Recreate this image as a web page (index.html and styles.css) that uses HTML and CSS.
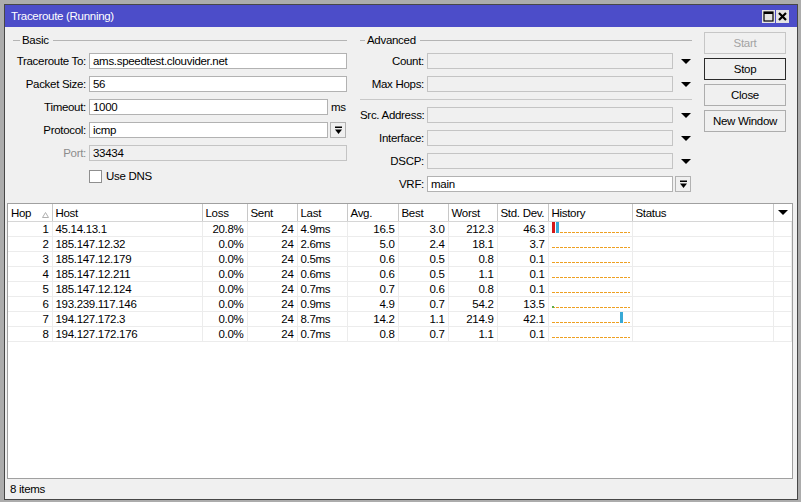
FILE: index.html
```html
<!DOCTYPE html>
<html lang="en">

<head>
    <meta charset="UTF-8" />
    <title>Traceroute (Running)</title>
    <link rel="stylesheet" href="styles.css">
</head>

<body>
    <div class="window">
        <div class="titlebar">
            <span class="title">Traceroute (Running)</span>
            <div class="win-btns">
                <span class="win-btn">
                    <svg width="11" height="11" viewBox="0 0 11 11"><rect x="1" y="1" width="9" height="9" fill="none" stroke="#000" stroke-width="1.2"/><rect x="1" y="1" width="9" height="2" fill="#000"/></svg>
                </span>
                <span class="win-btn">
                    <svg width="11" height="11" viewBox="0 0 11 11"><path d="M2 2 L9 9 M9 2 L2 9" stroke="#000" stroke-width="2.2"/></svg>
                </span>
            </div>
        </div>

        <div class="content">
            <div class="top">
                <div class="group basic">
                    <div class="legend"><span class="legend-dash"></span><span class="legend-text">Basic</span><span class="legend-line"></span></div>
                    <div class="row"><label>Traceroute To:</label><div class="field">ams.speedtest.clouvider.net</div></div>
                    <div class="row"><label>Packet Size:</label><div class="field">56</div></div>
                    <div class="row"><label>Timeout:</label><div class="field short">1000</div><span class="unit">ms</span></div>
                    <div class="row">
                        <label>Protocol:</label><div class="field short">icmp</div>
                        <span class="drop-btn"><svg width="9" height="9" viewBox="0 0 9 9"><rect x="1" y="0.5" width="7" height="1.5" fill="#000"/><path d="M1 3.5 H8 L4.5 8 Z" fill="#000"/></svg></span>
                    </div>
                    <div class="row"><label class="dim">Port:</label><div class="field off">33434</div></div>
                    <div class="row check-row"><span class="checkbox"></span><span>Use DNS</span></div>
                </div>

                <div class="group advanced">
                    <div class="legend"><span class="legend-dash"></span><span class="legend-text">Advanced</span><span class="legend-line"></span></div>
                    <div class="row"><label>Count:</label><div class="field off"></div><span class="arrow"></span></div>
                    <div class="row"><label>Max Hops:</label><div class="field off"></div><span class="arrow"></span></div>
                    <div class="separator"></div>
                    <div class="row"><label>Src. Address:</label><div class="field off"></div><span class="arrow"></span></div>
                    <div class="row"><label>Interface:</label><div class="field off"></div><span class="arrow"></span></div>
                    <div class="row"><label>DSCP:</label><div class="field off"></div><span class="arrow"></span></div>
                    <div class="row">
                        <label>VRF:</label><div class="field">main</div>
                        <span class="drop-btn"><svg width="9" height="9" viewBox="0 0 9 9"><rect x="1" y="0.5" width="7" height="1.5" fill="#000"/><path d="M1 3.5 H8 L4.5 8 Z" fill="#000"/></svg></span>
                    </div>
                </div>

                <div class="buttons">
                    <div class="btn disabled">Start</div>
                    <div class="btn default">Stop</div>
                    <div class="btn">Close</div>
                    <div class="btn">New Window</div>
                </div>
            </div>

            <div class="grid">
                <table>
                    <colgroup>
                        <col style="width:44px"><col style="width:150px"><col style="width:45px"><col style="width:50px">
                        <col style="width:50px"><col style="width:51px"><col style="width:50px"><col style="width:49px">
                        <col style="width:51px"><col style="width:84px"><col style="width:141px"><col style="width:18px">
                    </colgroup>
                    <thead>
                        <tr>
                            <th>Hop<svg class="sort" width="7" height="6" viewBox="0 0 7 6"><path d="M3.5 0.5 L6.5 5.5 H0.5 Z" fill="none" stroke="#b0b0b0"/></svg></th>
                            <th>Host</th>
                            <th>Loss</th>
                            <th>Sent</th>
                            <th>Last</th>
                            <th>Avg.</th>
                            <th>Best</th>
                            <th>Worst</th>
                            <th>Std. Dev.</th>
                            <th>History</th>
                            <th>Status</th>
                            <th class="menu"><span class="arrow"></span></th>
                        </tr>
                    </thead>
                    <tbody id="rows"></tbody>
                </table>
            </div>
        </div>

        <div class="statusbar">8 items</div>
    </div>

    <script>
        const hops = [
            { hop: 1, host: "45.14.13.1", loss: "20.8%", sent: 24, last: "4.9ms", avg: "16.5", best: "3.0", worst: "212.3", dev: "46.3",
              bars: [{ left: 3, w: 3, h: 11, c: "red" }, { left: 7, w: 3, h: 11, c: "blue" }] },
            { hop: 2, host: "185.147.12.32", loss: "0.0%", sent: 24, last: "2.6ms", avg: "5.0", best: "2.4", worst: "18.1", dev: "3.7", bars: [] },
            { hop: 3, host: "185.147.12.179", loss: "0.0%", sent: 24, last: "0.5ms", avg: "0.6", best: "0.5", worst: "0.8", dev: "0.1", bars: [] },
            { hop: 4, host: "185.147.12.211", loss: "0.0%", sent: 24, last: "0.6ms", avg: "0.6", best: "0.5", worst: "1.1", dev: "0.1", bars: [] },
            { hop: 5, host: "185.147.12.124", loss: "0.0%", sent: 24, last: "0.7ms", avg: "0.7", best: "0.6", worst: "0.8", dev: "0.1", bars: [] },
            { hop: 6, host: "193.239.117.146", loss: "0.0%", sent: 24, last: "0.9ms", avg: "4.9", best: "0.7", worst: "54.2", dev: "13.5",
              bars: [{ left: 3, w: 2, h: 2, c: "green" }] },
            { hop: 7, host: "194.127.172.3", loss: "0.0%", sent: 24, last: "8.7ms", avg: "14.2", best: "1.1", worst: "214.9", dev: "42.1",
              bars: [{ left: 71, w: 3, h: 11, c: "blue" }] },
            { hop: 8, host: "194.127.172.176", loss: "0.0%", sent: 24, last: "0.7ms", avg: "0.8", best: "0.7", worst: "1.1", dev: "0.1", bars: [] }
        ];

        hops.map(e => {
            const bars = e.bars.map(b =>
                `<span class="bar ${b.c}" style="left:${b.left}px;width:${b.w}px;height:${b.h}px"></span>`).join('');
            document.getElementById('rows').innerHTML += `
                <tr>
                    <td class="num">${e.hop}</td>
                    <td>${e.host}</td>
                    <td class="num">${e.loss}</td>
                    <td class="num">${e.sent}</td>
                    <td>${e.last}</td>
                    <td class="num">${e.avg}</td>
                    <td class="num">${e.best}</td>
                    <td class="num">${e.worst}</td>
                    <td class="num">${e.dev}</td>
                    <td class="history"><span class="hist-line"></span>${bars}</td>
                    <td></td>
                    <td></td>
                </tr>`;
        });
    </script>
</body>

</html>
```

FILE: styles.css
```css
body {
    margin: 0;
    background-color: #acacac;
    font-family: "Liberation Sans", Arial, sans-serif;
    font-size: 11.5px;
    letter-spacing: -0.3px;
    color: #000;
}

.window {
    box-sizing: border-box;
    margin: 4px 0 0 4px;
    width: 794px;
    height: 496px;
    border: 1px solid #474747;
    background-color: #f0f0f0;
    display: flex;
    flex-direction: column;
}

.titlebar {
    height: 22px;
    background-color: #4c4dc9;
    color: #fff;
    display: flex;
    align-items: center;
    justify-content: space-between;
    padding: 0 8px 0 6px;
}

.win-btns {
    display: flex;
    gap: 1px;
}

.win-btn {
    box-sizing: border-box;
    width: 13px;
    height: 13px;
    background-color: #e4e4e4;
    display: flex;
    align-items: center;
    justify-content: center;
}

.content {
    flex: 1;
    display: flex;
    flex-direction: column;
    padding: 0 4px 0 2px;
}

.top {
    height: 176px;
    display: flex;
    padding-left: 6px;
}

.group {
    display: flex;
    flex-direction: column;
}

.basic {
    width: 334px;
    margin-right: 13px;
}

.advanced {
    width: 332px;
    margin-right: 12px;
}

.legend {
    height: 26px;
    display: flex;
    align-items: center;
}

.legend-dash {
    width: 7px;
    border-top: 1px solid #b4b4b4;
}

.advanced .legend-dash {
    width: 5px;
}

.legend-text {
    padding: 0 4px 0 2px;
}

.legend-line {
    flex: 1;
    border-top: 1px solid #b4b4b4;
}

.row {
    height: 16px;
    margin-bottom: 7px;
    display: flex;
    align-items: center;
}

.row label {
    box-sizing: border-box;
    width: 76px;
    padding-right: 3px;
    text-align: right;
    white-space: nowrap;
}

.advanced .row label {
    width: 67px;
}

.dim {
    color: #8c8c8c;
}

.field {
    box-sizing: border-box;
    height: 16px;
    flex: 1;
    border: 1px solid #b2b2b2;
    background-color: #fff;
    padding-left: 3px;
    line-height: 14px;
    white-space: nowrap;
    overflow: hidden;
}

.field.short {
    flex: none;
    width: 239px;
}

.advanced .field {
    flex: none;
    width: 246px;
}

.field.off {
    background-color: #f0f0f0;
    border-color: #c4c4c4;
}

.unit {
    margin-left: 3px;
}

.drop-btn {
    box-sizing: border-box;
    width: 16px;
    height: 16px;
    margin-left: 2px;
    border: 1px solid #b2b2b2;
    background-color: #f0f0f0;
    display: flex;
    align-items: center;
    justify-content: center;
}

.arrow {
    width: 0;
    height: 0;
    margin-left: 8px;
    border-left: 5px solid transparent;
    border-right: 5px solid transparent;
    border-top: 5px solid #000;
}

.separator {
    height: 1px;
    background-color: #c8c8c8;
    margin-bottom: 7px;
}

.check-row {
    padding-left: 76px;
}

.checkbox {
    box-sizing: border-box;
    width: 13px;
    height: 13px;
    border: 1px solid #8f8f8f;
    background-color: #fff;
    margin-right: 4px;
}

.buttons {
    width: 82px;
    padding-top: 5px;
    display: flex;
    flex-direction: column;
    gap: 4px;
}

.btn {
    box-sizing: border-box;
    height: 22px;
    border: 1px solid #adadad;
    background-color: #f0f0f0;
    text-align: center;
    line-height: 20px;
}

.btn.disabled {
    color: #a3a3a3;
    border-color: #c6c6c6;
}

.btn.default {
    border-color: #2a2a2a;
}

.grid {
    flex: 1;
    border: 1px solid #a0a0a0;
    background-color: #fff;
    overflow: hidden;
}

table {
    table-layout: fixed;
    border-collapse: collapse;
    width: 783px;
}

th {
    height: 17px;
    padding: 0 0 0 3px;
    font-weight: normal;
    text-align: left;
    border-right: 1px solid #c8c8c8;
    border-bottom: 1px solid #d6d6d6;
    white-space: nowrap;
    overflow: hidden;
}

th.menu {
    padding: 0;
    border-right: none;
}

th.menu .arrow {
    display: block;
    margin-left: 4px;
}

.sort {
    float: right;
    margin: 5px 3px 0 0;
}

td {
    height: 14px;
    padding: 0 3px;
    line-height: 14px;
    border-right: 1px solid #ececec;
    border-bottom: 1px solid #ececec;
    white-space: nowrap;
    overflow: hidden;
}

td.num {
    text-align: right;
}

td.history {
    position: relative;
    padding: 0;
}

.hist-line {
    position: absolute;
    left: 3px;
    right: 2px;
    bottom: 3px;
    height: 1px;
    background: repeating-linear-gradient(to right, #eea022 0 3px, transparent 3px 4px);
}

.bar {
    position: absolute;
    bottom: 3px;
}

.bar.red {
    background-color: #d41818;
}

.bar.blue {
    background-color: #38a9d6;
}

.bar.green {
    background-color: #5cae4c;
}

.statusbar {
    height: 20px;
    padding-left: 5px;
    line-height: 20px;
    background-color: #f0f0f0;
}
```
